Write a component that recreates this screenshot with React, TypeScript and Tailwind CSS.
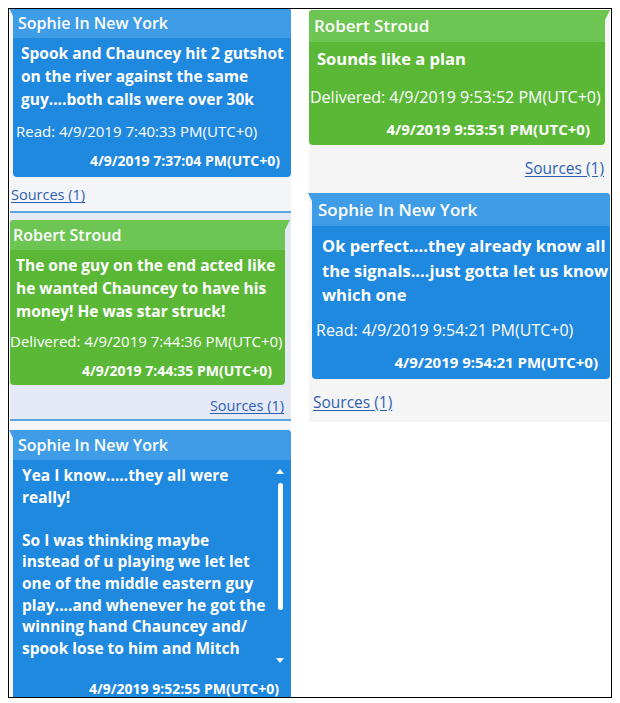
type Tone = "sophie" | "robert";

interface BubbleProps {
  tone: Tone;
  big?: boolean;
  lines: string[];
  status?: string;
  time: string;
  scroll?: boolean;
  spacing: {
    header: string;
    body: string;
    status: string;
    time: string;
  };
}

const Bubble = ({ tone, big, lines, status, time, scroll, spacing }: BubbleProps) => {
  const sophie = tone === "sophie";
  const name = sophie ? "Sophie In New York" : "Robert Stroud";
  const headBg = sophie ? "bg-[#3f9de7]" : "bg-[#6dc553]";
  const bodyBg = sophie ? "bg-[#1f88df]" : "bg-[#5ab836]";

  return (
    <div
      className={`relative text-white rounded-b-[4px] ${bodyBg} ${
        sophie ? "ml-[3px] rounded-tr-[4px]" : big ? "mr-[5px] rounded-tl-[4px]" : "mr-[6px] rounded-tl-[4px]"
      }`}
    >
      {/* the little tail on the top corner */}
      <div
        className={`absolute top-0 w-[5px] h-[10px] ${headBg} ${
          sophie
            ? "left-[-4px] [clip-path:polygon(0_0,100%_0,100%_100%)]"
            : "right-[-5px] [clip-path:polygon(0_0,100%_0,0_100%)]"
        }`}
      />
      <div
        className={`flex items-center font-semibold ${headBg} ${spacing.header} ${
          sophie ? "rounded-tr-[4px]" : "rounded-tl-[4px]"
        } ${big ? "text-[17px]" : "text-[16px]"}`}
      >
        {name}
      </div>

      {scroll ? (
        <div className="flex h-[208px]">
          <div className={`flex-1 font-bold ${spacing.body}`}>
            {lines.map((l, i) => (
              <div key={i} className="whitespace-nowrap">
                {l || "\u00a0"}
              </div>
            ))}
          </div>
          <div className="w-[14px] mr-[4px] flex flex-col items-center pt-[9px] pb-[5px]">
            <div className="w-0 h-0 border-x-[4px] border-x-transparent border-b-[5px] border-b-white" />
            <div className="mt-[9px] w-[5px] h-[127px] rounded-full bg-white" />
            <div className="flex-1" />
            <div className="w-0 h-0 border-x-[4px] border-x-transparent border-t-[5px] border-t-white" />
          </div>
        </div>
      ) : (
        <div className={`font-bold ${spacing.body}`}>
          {lines.map((l, i) => (
            <div key={i} className="whitespace-nowrap">
              {l}
            </div>
          ))}
        </div>
      )}

      {status && <div className={`whitespace-nowrap ${spacing.status}`}>{status}</div>}
      <div className={`text-right font-bold whitespace-nowrap ${spacing.time}`}>{time}</div>
    </div>
  );
};

const Sources = ({ className }: { className: string }) => (
  <div className={className}>
    <span className="text-[#2d5fb5] underline underline-offset-2">Sources (1)</span>
  </div>
);

const App = () => {
  return (
    <div className="min-h-screen bg-white font-['Open_Sans',sans-serif]">
      <div className="m-2 w-[604px] h-[690px] border border-black p-px overflow-hidden flex">
        {/* left column */}
        <div className="w-[281px] shrink-0 -mt-[2px]">
          <div className="bg-[#f4f5f8] pb-[6px] border-b-2 border-[#5ba6e0]">
            <Bubble
              tone="sophie"
              lines={["Spook and Chauncey hit 2 gutshot", "on the river against the same", "guy....both calls were over 30k"]}
              status="Read: 4/9/2019 7:40:33 PM(UTC+0)"
              time="4/9/2019 7:37:04 PM(UTC+0)"
              spacing={{
                header: "h-[30px] pl-[5px]",
                body: "pt-[4px] pl-[8px] text-[15.5px] leading-[23px]",
                status: "mt-[10px] pl-[3px] text-[15px] leading-[20px]",
                time: "mt-[10px] pb-[6px] pr-[11px] text-[14px] leading-[20px]",
              }}
            />
            <Sources className="mt-[8px] pl-px text-[14.5px] leading-[20px]" />
          </div>

          <div className="bg-[#e5e9f6] pt-[7px] pb-[3px] border-b-2 border-[#5ba6e0]">
            <Bubble
              tone="robert"
              lines={["The one guy on the end acted like", "he wanted Chauncey to have his", "money! He was star struck!"]}
              status="Delivered: 4/9/2019 7:44:36 PM(UTC+0)"
              time="4/9/2019 7:44:35 PM(UTC+0)"
              spacing={{
                header: "h-[30px] pl-[3px]",
                body: "pt-[4px] pl-[6px] text-[15.5px] leading-[23px]",
                status: "mt-[8px] text-[15px] leading-[20px]",
                time: "mt-[10px] pb-[4px] pr-[13px] text-[14px] leading-[20px]",
              }}
            />
            <Sources className="mt-[11px] pr-[7px] text-right text-[14.5px] leading-[20px]" />
          </div>

          <div className="bg-[#f4f5f8] pt-[9px]">
            <Bubble
              tone="sophie"
              scroll
              lines={[
                "Yea I know.....they all were",
                "really!",
                "",
                "So I was thinking maybe",
                "instead of u playing we let let",
                "one of the middle eastern guy",
                "play....and whenever he got the",
                "winning hand Chauncey and/",
                "spook lose to him and Mitch",
              ]}
              time="4/9/2019 9:52:55 PM(UTC+0)"
              spacing={{
                header: "h-[30px] pl-[5px]",
                body: "pt-[5px] pl-[9px] text-[15.5px] leading-[21.6px]",
                status: "",
                time: "mt-[11px] pb-[8px] pr-[12px] text-[14px] leading-[20px]",
              }}
            />
          </div>
        </div>

        {/* right column */}
        <div className="w-[301px] shrink-0 ml-[18px] self-start">
          <div className="bg-[#f5f5f5] pb-[14.5px]">
            <Bubble
              tone="robert"
              big
              lines={["Sounds like a plan"]}
              status="Delivered: 4/9/2019 9:53:52 PM(UTC+0)"
              time="4/9/2019 9:53:51 PM(UTC+0)"
              spacing={{
                header: "h-[32px] pl-[5px]",
                body: "pt-[5px] pl-[8px] text-[16.5px] leading-[24.5px]",
                status: "mt-[15px] pl-px text-[16px] leading-[21px]",
                time: "mt-[11px] pb-[5.5px] pr-[15px] text-[15px] leading-[21px]",
              }}
            />
            <Sources className="mt-[12.5px] pr-[6px] text-right text-[15.5px] leading-[21px]" />
          </div>

          <div className="bg-[#f5f5f5] pb-[9.5px]">
            <Bubble
              tone="sophie"
              big
              lines={["Ok perfect....they already know all", "the signals....just gotta let us know", "which one"]}
              status="Read: 4/9/2019 9:54:21 PM(UTC+0)"
              time="4/9/2019 9:54:21 PM(UTC+0)"
              spacing={{
                header: "h-[33px] pl-[6px]",
                body: "pt-[8px] pl-[10px] text-[16.5px] leading-[24.5px]",
                status: "mt-[12px] pl-[4px] text-[16px] leading-[21px]",
                time: "mt-[11px] pb-[6.5px] pr-[12px] text-[15px] leading-[21px]",
              }}
            />
            <Sources className="mt-[12.5px] pl-[4px] text-[15.5px] leading-[21px]" />
          </div>
        </div>
      </div>
    </div>
  );
};

export default App;
